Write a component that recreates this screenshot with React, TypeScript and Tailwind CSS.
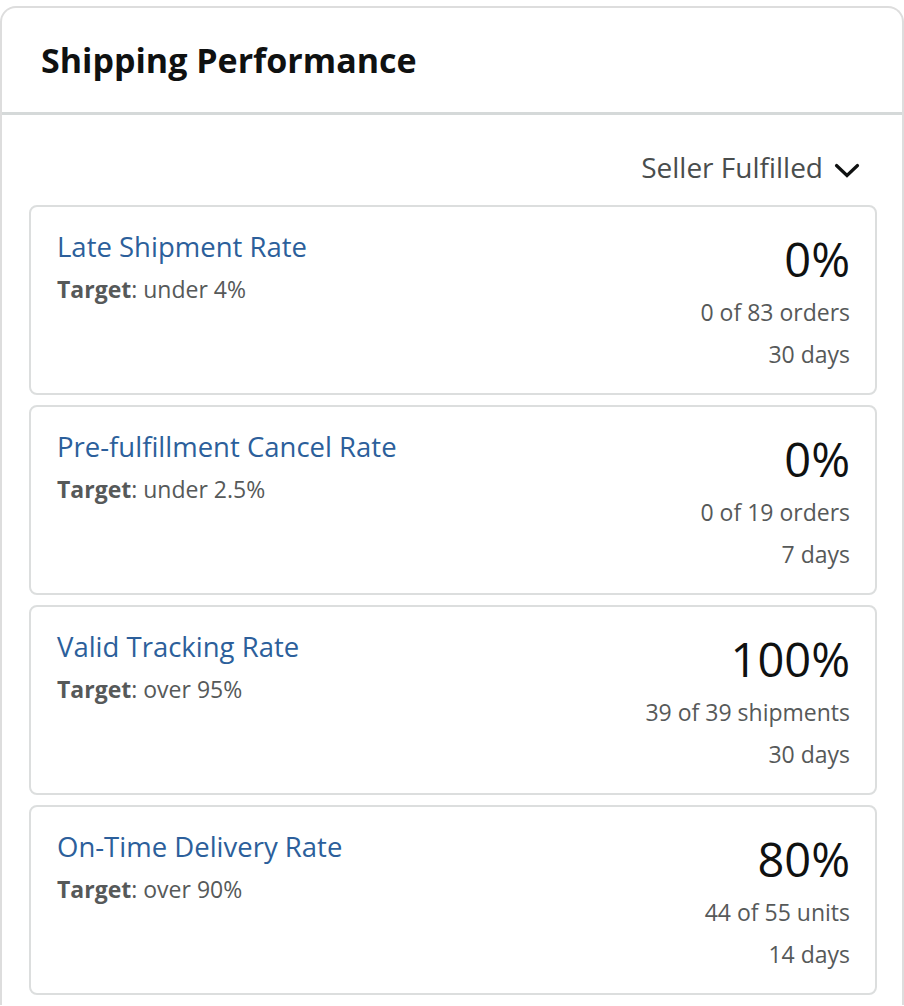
const metrics = [
  {
    title: "Late Shipment Rate",
    target: "under 4%",
    value: "0%",
    detail: "0 of 83 orders",
    period: "30 days",
  },
  {
    title: "Pre-fulfillment Cancel Rate",
    target: "under 2.5%",
    value: "0%",
    detail: "0 of 19 orders",
    period: "7 days",
  },
  {
    title: "Valid Tracking Rate",
    target: "over 95%",
    value: "100%",
    detail: "39 of 39 shipments",
    period: "30 days",
  },
  {
    title: "On-Time Delivery Rate",
    target: "over 90%",
    value: "80%",
    detail: "44 of 55 units",
    period: "14 days",
  },
];

const MetricCard = ({ m }: { m: (typeof metrics)[number] }) => (
  <div className="flex h-[190px] justify-between rounded-[8px] border-2 border-[#dcdede] bg-white pl-[26px] pr-[25px]">
    {/* Left: name + target */}
    <div className="pt-[22px]">
      <a href="#" className="block text-[27.5px] leading-[36px] text-[#2c5f9b]">
        {m.title}
      </a>
      <p className="mt-[9px] text-[23px] leading-[30px] text-[#565959]">
        <span className="font-bold">Target</span>: {m.target}
      </p>
    </div>

    {/* Right: value + counts */}
    <div className="flex flex-col items-end pt-[26px] text-right">
      <span className="text-[47px] leading-[52px] text-[#0f1111]">{m.value}</span>
      <span className="mt-[12px] text-[23px] leading-[30px] text-[#565959]">{m.detail}</span>
      <span className="mt-[12px] text-[23px] leading-[30px] text-[#565959]">{m.period}</span>
    </div>
  </div>
);

export default function App() {
  return (
    <div className="min-h-screen bg-white pt-[6px] font-['Open_Sans',sans-serif]">
      <div className="rounded-t-[16px] border-x-2 border-t-2 border-[#dddddd] bg-white">
        {/* Header */}
        <div className="flex h-[107px] items-center border-b-[3px] border-[#d5d9d9] pl-[39px]">
          <h1 className="text-[34px] font-bold text-[#0f1111]">Shipping Performance</h1>
        </div>

        {/* Filter */}
        <div className="flex items-center justify-end gap-[11px] pr-[42px] pt-[34px]">
          <span className="text-[28px] leading-[36px] text-[#494d4d]">Seller Fulfilled</span>
          <svg className="mt-[6px]" width="26" height="15" viewBox="0 0 26 15" fill="none">
            <path d="M2.5 2.5l10.5 10 10.5-10" stroke="#0f1111" strokeWidth="3.2" strokeLinecap="round" strokeLinejoin="miter" />
          </svg>
        </div>

        {/* Metric cards */}
        <div className="ml-[27px] mr-[25px] mt-[20px] flex flex-col gap-[10px] pb-[10px]">
          {metrics.map((m) => (
            <MetricCard key={m.title} m={m} />
          ))}
        </div>
      </div>
    </div>
  );
}
